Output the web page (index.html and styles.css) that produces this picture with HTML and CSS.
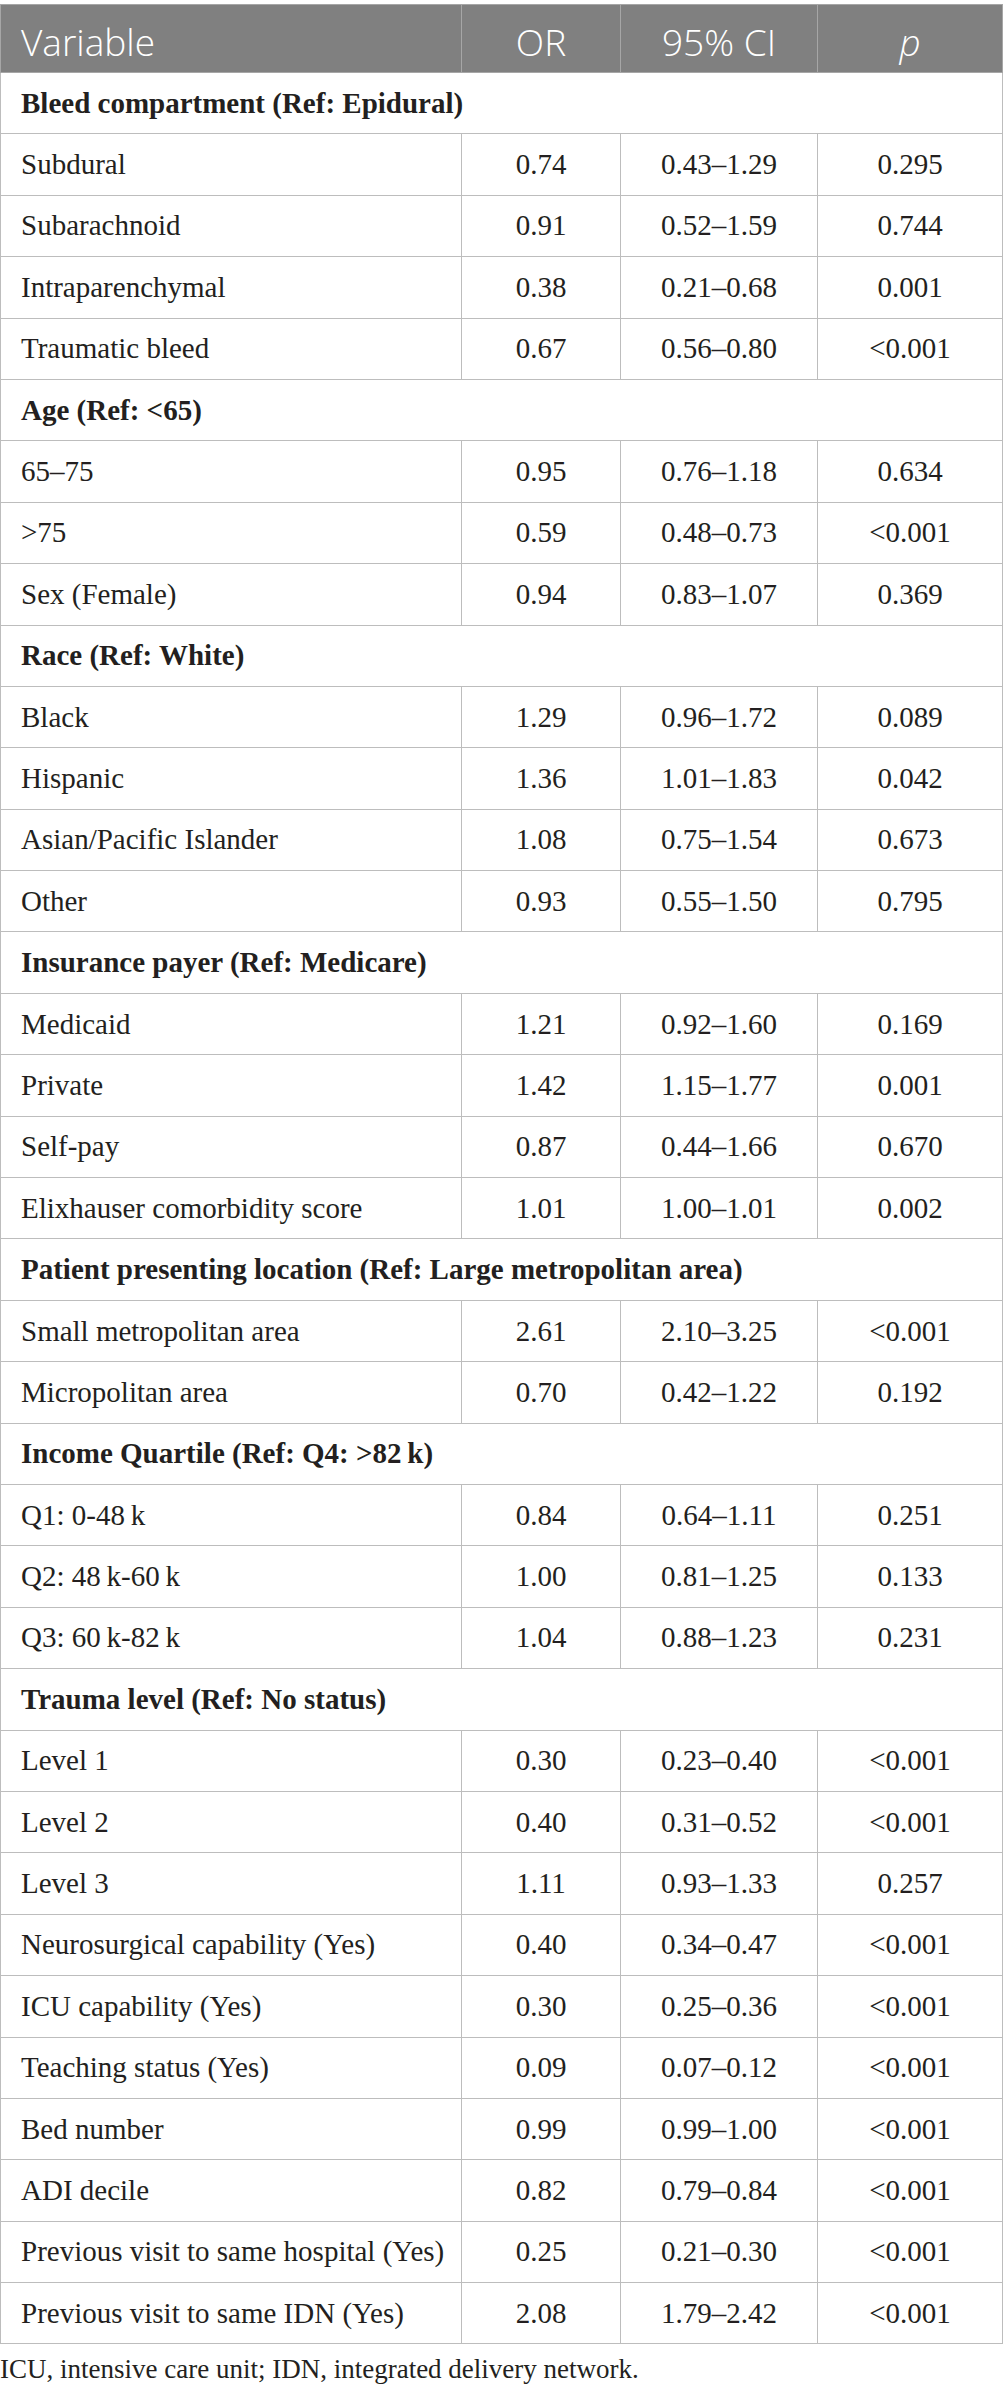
FILE: index.html
```html
<!DOCTYPE html>
<html lang="en">
<head>
    <meta charset="UTF-8">
    <meta name="viewport" content="width=device-width, initial-scale=1.0">
    <title>Odds of transfer</title>
    <link rel="stylesheet" href="styles.css">
</head>
<body>
    <table class="results">
        <thead>
            <tr>
                <th class="var">Variable</th>
                <th>OR</th>
                <th>95% CI</th>
                <th><i>p</i></th>
            </tr>
        </thead>
        <tbody>
            <tr class="group"><td colspan="4">Bleed compartment (Ref: Epidural)</td></tr>
            <tr><td>Subdural</td><td>0.74</td><td>0.43–1.29</td><td>0.295</td></tr>
            <tr><td>Subarachnoid</td><td>0.91</td><td>0.52–1.59</td><td>0.744</td></tr>
            <tr><td>Intraparenchymal</td><td>0.38</td><td>0.21–0.68</td><td>0.001</td></tr>
            <tr><td>Traumatic bleed</td><td>0.67</td><td>0.56–0.80</td><td>&lt;0.001</td></tr>
            <tr class="group"><td colspan="4">Age (Ref: &lt;65)</td></tr>
            <tr><td>65–75</td><td>0.95</td><td>0.76–1.18</td><td>0.634</td></tr>
            <tr><td>&gt;75</td><td>0.59</td><td>0.48–0.73</td><td>&lt;0.001</td></tr>
            <tr><td>Sex (Female)</td><td>0.94</td><td>0.83–1.07</td><td>0.369</td></tr>
            <tr class="group"><td colspan="4">Race (Ref: White)</td></tr>
            <tr><td>Black</td><td>1.29</td><td>0.96–1.72</td><td>0.089</td></tr>
            <tr><td>Hispanic</td><td>1.36</td><td>1.01–1.83</td><td>0.042</td></tr>
            <tr><td>Asian/Pacific Islander</td><td>1.08</td><td>0.75–1.54</td><td>0.673</td></tr>
            <tr><td>Other</td><td>0.93</td><td>0.55–1.50</td><td>0.795</td></tr>
            <tr class="group"><td colspan="4">Insurance payer (Ref: Medicare)</td></tr>
            <tr><td>Medicaid</td><td>1.21</td><td>0.92–1.60</td><td>0.169</td></tr>
            <tr><td>Private</td><td>1.42</td><td>1.15–1.77</td><td>0.001</td></tr>
            <tr><td>Self-pay</td><td>0.87</td><td>0.44–1.66</td><td>0.670</td></tr>
            <tr><td>Elixhauser comorbidity score</td><td>1.01</td><td>1.00–1.01</td><td>0.002</td></tr>
            <tr class="group"><td colspan="4">Patient presenting location (Ref: Large metropolitan area)</td></tr>
            <tr><td>Small metropolitan area</td><td>2.61</td><td>2.10–3.25</td><td>&lt;0.001</td></tr>
            <tr><td>Micropolitan area</td><td>0.70</td><td>0.42–1.22</td><td>0.192</td></tr>
            <tr class="group"><td colspan="4">Income Quartile (Ref: Q4: &gt;82&#8201;k)</td></tr>
            <tr><td>Q1: 0-48&#8201;k</td><td>0.84</td><td>0.64–1.11</td><td>0.251</td></tr>
            <tr><td>Q2: 48&#8201;k-60&#8201;k</td><td>1.00</td><td>0.81–1.25</td><td>0.133</td></tr>
            <tr><td>Q3: 60&#8201;k-82&#8201;k</td><td>1.04</td><td>0.88–1.23</td><td>0.231</td></tr>
            <tr class="group"><td colspan="4">Trauma level (Ref: No status)</td></tr>
            <tr><td>Level 1</td><td>0.30</td><td>0.23–0.40</td><td>&lt;0.001</td></tr>
            <tr><td>Level 2</td><td>0.40</td><td>0.31–0.52</td><td>&lt;0.001</td></tr>
            <tr><td>Level 3</td><td>1.11</td><td>0.93–1.33</td><td>0.257</td></tr>
            <tr><td>Neurosurgical capability (Yes)</td><td>0.40</td><td>0.34–0.47</td><td>&lt;0.001</td></tr>
            <tr><td>ICU capability (Yes)</td><td>0.30</td><td>0.25–0.36</td><td>&lt;0.001</td></tr>
            <tr><td>Teaching status (Yes)</td><td>0.09</td><td>0.07–0.12</td><td>&lt;0.001</td></tr>
            <tr><td>Bed number</td><td>0.99</td><td>0.99–1.00</td><td>&lt;0.001</td></tr>
            <tr><td>ADI decile</td><td>0.82</td><td>0.79–0.84</td><td>&lt;0.001</td></tr>
            <tr><td>Previous visit to same hospital (Yes)</td><td>0.25</td><td>0.21–0.30</td><td>&lt;0.001</td></tr>
            <tr><td>Previous visit to same IDN (Yes)</td><td>2.08</td><td>1.79–2.42</td><td>&lt;0.001</td></tr>
        </tbody>
    </table>

    <p class="footnote">ICU, intensive care unit; IDN, integrated delivery network.</p>
</body>
</html>
```

FILE: styles.css
```css
body {
    margin: 0;
    padding-top: 4px;
    background: #fff;
    font-family: "Liberation Serif", "Times New Roman", serif;
    color: #231f20;
}

.results {
    width: 1003px;
    border-collapse: collapse;
    table-layout: fixed;
}

.results th,
.results td {
    box-sizing: border-box;
    padding: 0;
}

.results th {
    height: 68px;
    padding-top: 5px;
    background-color: #808080;
    color: #fff;
    font-family: "Open Sans", sans-serif;
    font-weight: 300;
    font-size: 37px;
    text-align: center;
    border: 1px solid #a6a6a6;
}

.results th:nth-child(1) { width: 461px; }
.results th:nth-child(2) { width: 159px; }
.results th:nth-child(3) { width: 197px; }

.results th.var {
    text-align: left;
    padding-left: 20px;
}

.results td {
    height: 61.4px;
    font-size: 29px;
    text-align: center;
    border: 1px solid #bdbdbd;
}

.results td:first-child {
    text-align: left;
    padding-left: 20px;
}

.group td {
    font-weight: bold;
}

.footnote {
    margin: 10px 0 0 0;
    font-size: 27px;
}
```
